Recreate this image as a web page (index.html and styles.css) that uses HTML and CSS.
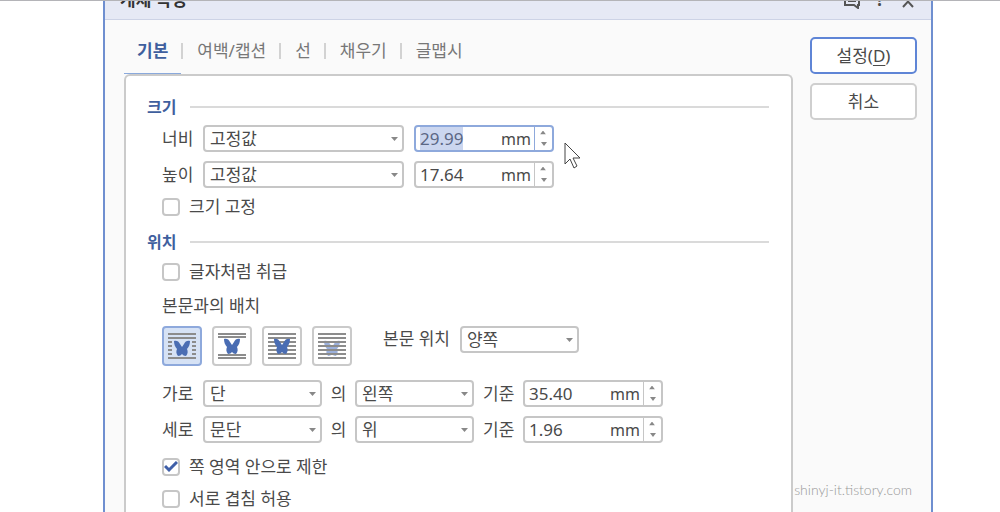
FILE: index.html
```html
<!DOCTYPE html>
<html lang="ko">
  <head>
    <meta charset="UTF-8" />
    <meta name="viewport" content="width=device-width, initial-scale=1.0" />
    <title>개체 속성</title>
    <link rel="stylesheet" href="styles.css">
  </head>
  <body>
    <!-- shared butterfly shape for the wrap buttons -->
    <svg class="defs" width="0" height="0">
      <symbol id="butterfly" viewBox="0 0 16 16">
        <path d="M0 1C2 0 5 1 6 4L8 7L10 4C11 1 14 0 16 1C16 4 15 7 13 9C14 11 14 14 12 16C10 16 9 15 8 14C7 15 6 16 4 16C2 14 2 11 3 9C1 7 0 4 0 1Z" />
      </symbol>
    </svg>
    <main class="dialog">
      <header class="titlebar">
        <h1>개체 속성</h1>
        <button class="title-button" aria-label="의견">
          <svg width="18" height="18" viewBox="0 0 18 18"><path d="M2 2H16V14H15V17L11 14H2ZM5 7H13M5 10H13" /></svg>
        </button>
        <button class="title-button" aria-label="도움말">?</button>
        <button class="title-button" aria-label="닫기">
          <svg width="18" height="18" viewBox="0 0 18 18"><path d="M4 5L14 16M14 5L4 16" /></svg>
        </button>
      </header>
      <div class="content">
        <div class="main">
          <nav class="tabs">
            <a class="tab active" href="#basic">기본</a>
            <a class="tab" href="#margin">여백/캡션</a>
            <a class="tab" href="#line">선</a>
            <a class="tab" href="#fill">채우기</a>
            <a class="tab" href="#wordart">글맵시</a>
          </nav>
          <form class="panel" id="basic">
            <h2>크기</h2>
            <div class="row">
              <label class="name" for="width">너비</label>
              <select class="wide" id="widthType" aria-label="너비 종류"><option>고정값</option></select>
              <div class="spinner focused">
                <input type="text" id="width" value="29.99">
                <span class="unit">mm</span>
                <div class="arrows">
                  <button type="button" class="up" aria-label="늘리기"></button>
                  <button type="button" class="down" aria-label="줄이기"></button>
                </div>
              </div>
            </div>
            <div class="row next">
              <label class="name" for="height">높이</label>
              <select class="wide" id="heightType" aria-label="높이 종류"><option>고정값</option></select>
              <div class="spinner">
                <input type="text" id="height" value="17.64">
                <span class="unit">mm</span>
                <div class="arrows">
                  <button type="button" class="up" aria-label="늘리기"></button>
                  <button type="button" class="down" aria-label="줄이기"></button>
                </div>
              </div>
            </div>
            <label class="check"><input type="checkbox">크기 고정</label>

            <h2 class="position">위치</h2>
            <label class="check"><input type="checkbox">글자처럼 취급</label>
            <p>본문과의 배치</p>
            <div class="wraps">
              <button type="button" class="wrap active" aria-label="어울림">
                <svg width="28" height="28" viewBox="0 0 28 28">
                  <path class="lines" d="M0 2H28M0 6H28M0 10H4M0 14H4M0 18H4M0 22H4M24 10H28M24 14H28M24 18H28M24 22H28M0 26H28" />
                  <use href="#butterfly" x="6" y="8" width="16" height="16" />
                </svg>
              </button>
              <button type="button" class="wrap" aria-label="자리 차지">
                <svg width="28" height="28" viewBox="0 0 28 28">
                  <path class="lines" d="M0 2H28M0 5H28M0 23H28M0 26H28" />
                  <use href="#butterfly" x="6" y="6" width="16" height="16" />
                </svg>
              </button>
              <button type="button" class="wrap" aria-label="글 앞으로">
                <svg width="28" height="28" viewBox="0 0 28 28">
                  <path class="lines" d="M0 2H28M0 6H28M0 10H28M0 14H28M0 18H28M0 22H28M0 26H28" />
                  <use href="#butterfly" x="6" y="6" width="16" height="16" />
                </svg>
              </button>
              <button type="button" class="wrap" aria-label="글 뒤로">
                <svg width="28" height="28" viewBox="0 0 28 28">
                  <use class="faded" href="#butterfly" x="6" y="8" width="16" height="16" />
                  <path class="lines" d="M0 2H28M0 6H28M0 10H28M0 14H28M0 18H28M0 22H28M0 26H28" />
                </svg>
              </button>
              <label class="side" for="side">본문 위치</label>
              <select class="small" id="side"><option>양쪽</option></select>
            </div>
            <div class="row offset">
              <label class="name" for="hBase">가로</label>
              <select class="small" id="hBase"><option>단</option></select>
              <label class="of" for="hAlign">의</label>
              <select class="small" id="hAlign"><option>왼쪽</option></select>
              <label class="from" for="x">기준</label>
              <div class="spinner">
                <input type="text" id="x" value="35.40">
                <span class="unit">mm</span>
                <div class="arrows">
                  <button type="button" class="up" aria-label="늘리기"></button>
                  <button type="button" class="down" aria-label="줄이기"></button>
                </div>
              </div>
            </div>
            <div class="row next">
              <label class="name" for="vBase">세로</label>
              <select class="small" id="vBase"><option>문단</option></select>
              <label class="of" for="vAlign">의</label>
              <select class="small" id="vAlign"><option>위</option></select>
              <label class="from" for="y">기준</label>
              <div class="spinner">
                <input type="text" id="y" value="1.96">
                <span class="unit">mm</span>
                <div class="arrows">
                  <button type="button" class="up" aria-label="늘리기"></button>
                  <button type="button" class="down" aria-label="줄이기"></button>
                </div>
              </div>
            </div>
            <label class="check limit"><input type="checkbox" checked>쪽 영역 안으로 제한</label>
            <label class="check"><input type="checkbox">서로 겹침 허용</label>
          </form>
        </div>
        <div class="actions">
          <button class="action primary">설정(<u>D</u>)</button>
          <button class="action">취소</button>
        </div>
      </div>
    </main>
    <div class="watermark">shinyj-it.tistory.com</div>
    <svg class="pointer" width="18" height="28" viewBox="0 0 18 28">
      <path d="M1 1V22L6 17L10 26L13 24L9 16H16Z" />
    </svg>
    <script>
      document.querySelector('#width').select();
    </script>
  </body>
</html>
```

FILE: styles.css
```css
* {
  box-sizing: border-box;
}
body {
  margin: 0;
  height: 100vh;
  overflow: hidden;
  background: #fff;
  border-top: 1px solid #b4b4b8;
  font-family: "Noto Sans", "Noto Sans CJK KR", sans-serif;
  font-size: 17px;
  line-height: 24px;
  color: #4a4a4a;
}
button, input, select {
  font: inherit;
  color: inherit;
}
.defs {
  position: absolute;
}
.dialog {
  display: flex;
  flex-direction: column;
  height: 100%;
  margin: 0 67px 0 103px;
  background: #fafafa;
  border: solid #6f8fd0;
  border-width: 0 2px;
}
.titlebar {
  flex: none;
  display: flex;
  align-items: flex-end;
  gap: 10px;
  height: 19px;
  padding: 0 14px 7px 15px;
  background: #e6e9f5;
  border-bottom: 1px solid #cdd3e6;
}
h1 {
  flex: 1;
  margin: 0;
  font-size: 17px;
  line-height: 24px;
  color: #333;
}
.title-button {
  display: flex;
  align-items: center;
  justify-content: center;
  width: 18px;
  height: 24px;
  padding: 0;
  border: none;
  background: none;
  font-weight: bold;
}
.title-button path {
  fill: none;
  stroke: #555;
  stroke-width: 2;
}
.content {
  flex: 1;
  display: flex;
  min-height: 0;
  gap: 17px;
  padding: 0 14px 0 19px;
}
.main {
  flex: 1;
  display: flex;
  flex-direction: column;
}
.tabs {
  display: flex;
  height: 54px;
}
.tab {
  display: flex;
  align-items: center;
  padding-top: 8px;
  color: #777;
  text-decoration: none;
}
.tab.active {
  padding: 8px 13px 0;
  box-shadow: inset 0 -1px #8aa9dc;
  color: #3f5f9e;
  font-weight: bold;
}
.tab + .tab::before {
  content: "";
  width: 2px;
  height: 16px;
  margin: 0 14px 0 13px;
  background: #d2d2d2;
}
.tab.active + .tab::before {
  margin-left: 0;
}
.panel {
  flex: 1;
  padding: 19px 22px 0 36px;
  background: #fff;
  border: 2px solid #cbcbcb;
  border-bottom: none;
  border-radius: 6px 6px 0 0;
}
h2 {
  display: flex;
  align-items: center;
  gap: 14px;
  margin: 0 0 6px -15px;
  font-size: 16px;
  color: #3f5f9e;
}
h2::after {
  content: "";
  flex: 1;
  height: 2px;
  background: #dadada;
}
h2.position {
  margin-top: 11px;
}
.row {
  display: flex;
  align-items: center;
}
.row.next {
  margin-top: 9px;
}
.row.offset {
  margin-top: 14px;
}
.name {
  width: 41px;
}
select {
  appearance: none;
  height: 27px;
  padding: 0 20px 0 5px;
  border: 2px solid #c6c6c6;
  border-radius: 4px;
  background: #fff url('data:image/svg+xml,<svg xmlns="http://www.w3.org/2000/svg" width="7" height="4"><path d="M0 0H7L3.5 4Z" fill="%23888"/></svg>') no-repeat right 4px center;
}
select.wide {
  width: 201px;
  margin-right: 10px;
}
select.small {
  width: 119px;
}
.of {
  width: 33px;
  text-align: center;
}
.from {
  width: 49px;
  padding-left: 9px;
}
.spinner {
  display: flex;
  width: 140px;
  height: 27px;
  border: 2px solid #c6c6c6;
  border-radius: 4px;
  background: #fff;
}
.spinner.focused {
  border-color: #8ea9dc;
}
.spinner input {
  flex: 1;
  min-width: 0;
  padding: 0 0 0 4px;
  border: none;
  outline: none;
  background: none;
}
.spinner input::selection {
  background: #cbd6ef;
  color: #5b6785;
}
.unit {
  padding-right: 3px;
  font-size: 16px;
}
.arrows {
  display: flex;
  flex-direction: column;
  width: 18px;
  border-left: 1px solid #c6c6c6;
}
.focused .arrows {
  border-color: #8ea9dc;
}
.arrows button {
  flex: 1;
  padding: 0;
  border: none;
  background: url('data:image/svg+xml,<svg xmlns="http://www.w3.org/2000/svg" width="6" height="4"><path d="M0 0H6L3 4Z" fill="%23888"/></svg>') no-repeat center;
}
.arrows .up {
  transform: rotate(180deg);
}
.check {
  display: flex;
  align-items: center;
  gap: 9px;
  margin-top: 7px;
}
.check.limit {
  margin-top: 12px;
}
.check.limit + .check {
  margin-top: 8px;
}
h2 + .check {
  margin-top: 0;
}
.check input {
  appearance: none;
  width: 18px;
  height: 18px;
  margin: 0;
  border: 2px solid #c6c6c6;
  border-radius: 4px;
  background: #fff;
}
.check input:checked {
  background: #fff url('data:image/svg+xml,<svg xmlns="http://www.w3.org/2000/svg" width="14" height="12"><path d="M1 5L5 9L13 1" fill="none" stroke="%233f5fa8" stroke-width="3"/></svg>') no-repeat center;
}
p {
  margin: 10px 0 8px;
}
.wraps {
  display: flex;
  gap: 10px;
}
.wrap {
  display: flex;
  align-items: center;
  justify-content: center;
  width: 40px;
  height: 40px;
  padding: 0;
  border: 2px solid #cacaca;
  border-radius: 4px;
  background: #fff;
}
.wrap.active {
  background: #d6e2f5;
  border-color: #8ea9dc;
}
.wrap use {
  fill: #4a6db3;
}
.wrap .faded {
  fill: #9bb0dc;
}
.lines {
  stroke: #8c8c8c;
  stroke-width: 2;
}
.side {
  margin-left: 21px;
  padding-top: 1px;
}
.actions {
  display: flex;
  flex-direction: column;
  gap: 9px;
  width: 107px;
  padding-top: 17px;
}
.action {
  height: 37px;
  padding: 0;
  border: 2px solid #cfcfcf;
  border-radius: 5px;
  background: #fff;
}
.action.primary {
  border-color: #5f85d6;
}
.action u {
  text-underline-offset: 3px;
}
.watermark {
  position: absolute;
  right: 88px;
  bottom: 10px;
  font-family: Lato, sans-serif;
  font-size: 14px;
  font-weight: 300;
  color: #999;
}
.pointer {
  position: absolute;
  left: 564px;
  top: 142px;
}
.pointer path {
  fill: #fff;
  stroke: #444;
}
```
